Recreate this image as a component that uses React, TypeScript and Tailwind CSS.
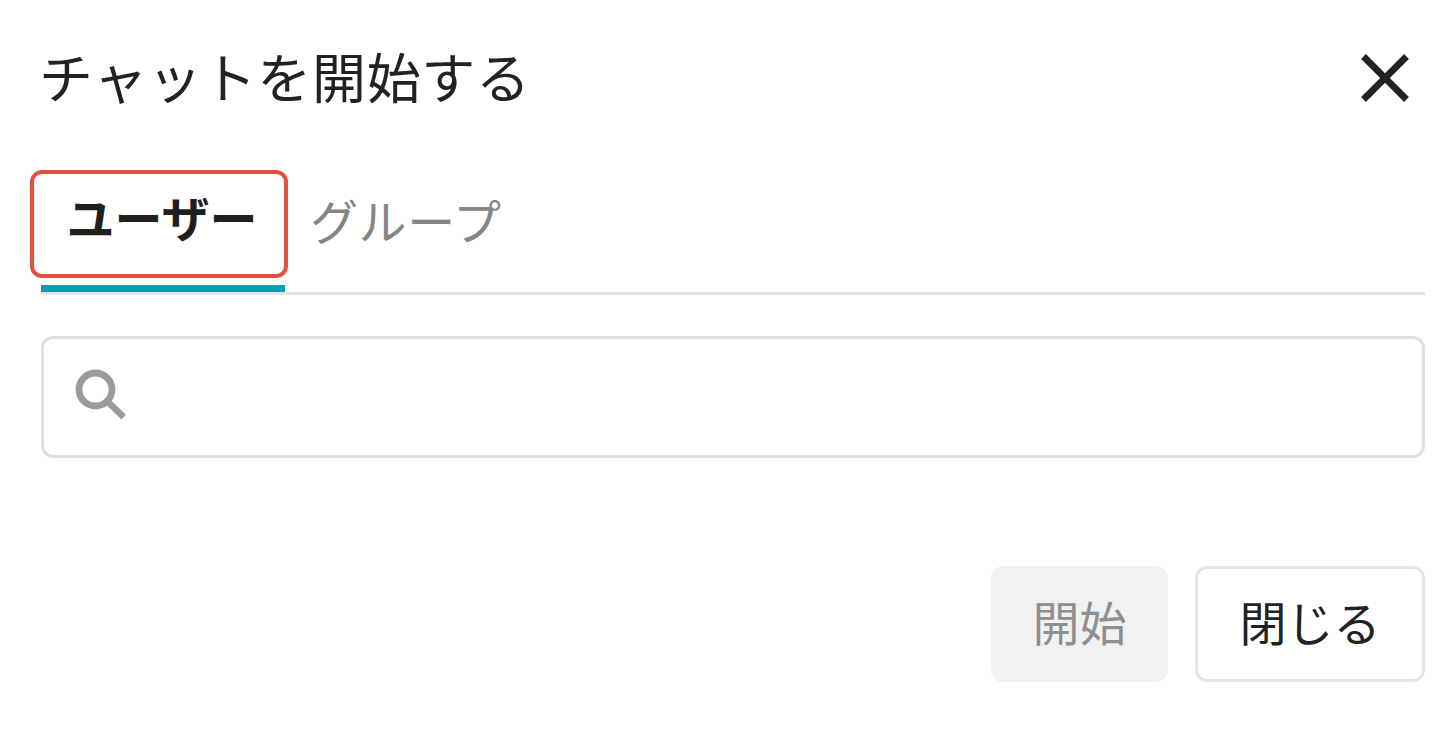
import React, { useState } from 'react';
import { MdClose } from 'react-icons/md';

type TabId = 'user' | 'group';

const SearchIcon: React.FC = () => (
  <svg className="h-[52px] w-[52px] shrink-0" viewBox="0 0 52 52" fill="none" stroke="#9b9b9b">
    <circle cx="20.5" cy="20.5" r="16.5" strokeWidth="6.8" />
    <path d="M32 32L48.7 48.2" strokeWidth="6.6" />
  </svg>
);

const StartChatDialog: React.FC = () => {
  const [tab, setTab] = useState<TabId>('user');
  const [query, setQuery] = useState('');

  const activeTab = 'font-bold text-[#1f1f1f]';
  const idleTab = 'text-[#858585]';

  return (
    <div className="flex h-[736px] w-[1446px] flex-col bg-white pl-[41px] pr-[21px] font-['Noto_Sans_CJK_JP',sans-serif] text-[#222]">
      <header className="flex h-[156px] items-center justify-between">
        <h2 className="-ml-0.5 -mt-[5px] whitespace-nowrap text-[54px] leading-[80px] tracking-[0.7px]">チャットを開始する</h2>
        <button type="button" aria-label="閉じる" className="-mr-px flex h-[82px] w-[82px] items-center justify-center">
          <MdClose className="h-[82px] w-[82px] text-[#222]" />
        </button>
      </header>

      <div className="mt-[14px] flex h-[125px] border-b-[3px] border-[#e4e4e4]">
        <button
          type="button"
          onClick={() => setTab('user')}
          className="relative flex w-[244px] justify-center pr-0.5 pt-2.5"
        >
          <span className={`text-[48px] leading-[72px] ${tab === 'user' ? activeTab : idleTab}`}>ユーザー</span>
          <span className="absolute -left-[11px] top-0 h-[108px] w-[258px] rounded-xl border-4 border-[#e5503c]" />
          {tab === 'user' && <span className="absolute bottom-0 left-0 h-[7px] w-full bg-[#0a9db8]" />}
        </button>
        <button type="button" onClick={() => setTab('group')} className="flex pl-[25px] pt-[13px]">
          <span className={`text-[48px] leading-[72px] tracking-[0.6px] ${tab === 'group' ? activeTab : idleTab}`}>グループ</span>
        </button>
      </div>

      <label className="mt-[41px] flex h-[122px] items-center rounded-xl border-[3px] border-[#e0e0e0] pl-[31px] pr-6">
        <span className="-mt-1">
          <SearchIcon />
        </span>
        <input
          type="text"
          aria-label="ユーザー"
          value={query}
          onChange={(e) => setQuery(e.target.value)}
          className="ml-4 h-full w-full text-[44px] outline-none"
        />
      </label>

      <footer className="mt-[108px] flex justify-end gap-[27px] text-[47px] leading-[70px]">
        <button type="button" disabled className="h-[116px] w-[177px] rounded-xl bg-[#f1f1f1] pb-1.5 text-[#8f8f8f]">
          開始
        </button>
        <button type="button" className="h-[116px] w-[230px] rounded-xl border-[3px] border-[#e6e6e6] pb-1.5">
          閉じる
        </button>
      </footer>
    </div>
  );
};

export default StartChatDialog;
